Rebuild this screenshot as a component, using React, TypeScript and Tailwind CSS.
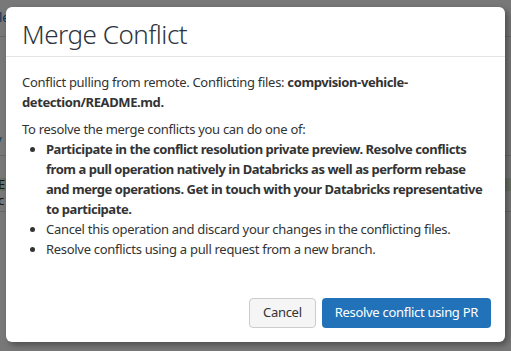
import React from "react";

const font = { fontFamily: '"Segoe UI", "Noto Sans", sans-serif' };

function BackgroundPage() {
  // the page behind the dialog, only slivers of it show at the edges
  return (
    <div className="flex h-full w-full flex-col bg-white text-[13px] text-[#333]">
      <div className="flex h-[37px] items-center border-b border-[#ddd] px-1 text-[#2272b9]">
        <span className="-ml-[5px]">lea</span>
      </div>
      <div className="h-[92px]" />
      <div className="flex h-[27px] items-center border-b border-[#ddd] text-[#2272b9]">
        <span className="-ml-[3px]">/</span>
      </div>
      <div className="h-[22px]" />
      <div className="flex h-[13px] items-center bg-[#dff0d8]">
        <span className="-ml-[2px]">E</span>
      </div>
      <div className="flex h-[21px] items-center border-b border-[#ddd]">
        <span className="-ml-[2px]">c</span>
      </div>
    </div>
  );
}

export default function App() {
  return (
    <div className="relative h-[351px] w-[511px] overflow-hidden" style={font}>
      <BackgroundPage />
      <div className="absolute inset-0 bg-[rgba(0,0,0,0.53)]" />

      <div className="absolute left-[6px] top-[7px] flex h-[335px] w-[499px] flex-col rounded-[6px] bg-white shadow-[3px_3px_6px_rgba(0,0,0,0.35)]">
        <div className="border-b border-[#e5e5e5] px-4 pb-[6px] pt-[11px]">
          <h1 className="text-[26px] font-light leading-[32px] tracking-[-0.5px] text-[#2d3540]">
            Merge Conflict
          </h1>
        </div>

        <div className="flex-1 px-4 pt-[15px] text-[13px] leading-[20px] tracking-[-0.3px] text-[#333]">
          <p className="mb-[7px]">
            Conflict pulling from remote. Conflicting files:{" "}
            <b className="tracking-[-0.4px]">compvision-vehicle-detection/README.md.</b>
          </p>
          <p>To resolve the merge conflicts you can do one of:</p>
          <ul className="list-disc pl-6">
            <li className="font-bold tracking-[-0.45px]">
              Participate in the conflict resolution private preview. Resolve
              conflicts from a pull operation natively in Databricks as well as
              perform rebase and merge operations. Get in touch with your
              Databricks representative to participate.
            </li>
            <li>
              Cancel this operation and discard your changes in the conflicting
              files.
            </li>
            <li>Resolve conflicts using a pull request from a new branch.</li>
          </ul>
        </div>

        <div className="flex justify-end gap-[6px] px-[14px] pb-[14px] tracking-[-0.3px]">
          <button className="h-[30px] rounded-[4px] border border-[#ccc] bg-[#f5f5f5] px-[13px] text-[13px] text-[#333]">
            Cancel
          </button>
          <button className="h-[30px] rounded-[4px] bg-[#2272b9] px-[13px] text-[13px] text-white">
            Resolve conflict using PR
          </button>
        </div>
      </div>
    </div>
  );
}
